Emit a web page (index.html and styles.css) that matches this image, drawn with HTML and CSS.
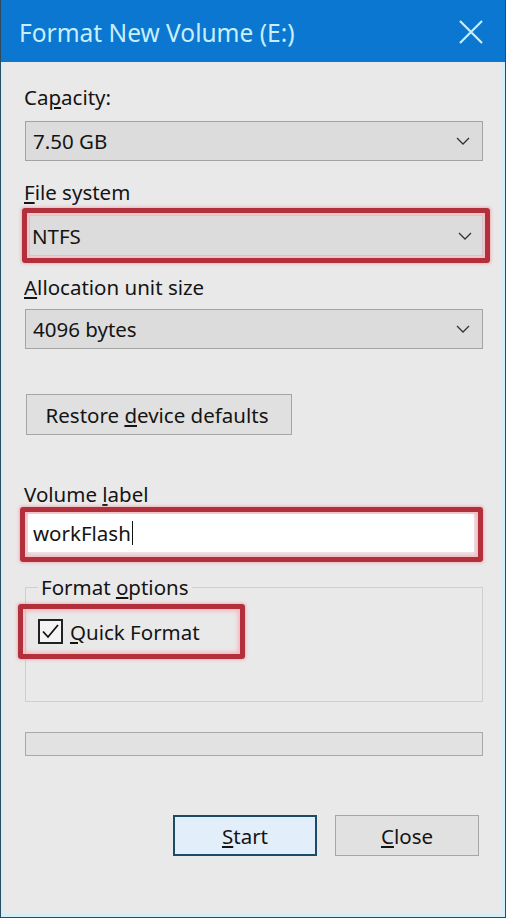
FILE: index.html
```html
<!DOCTYPE html>
<html>
<head>
<meta charset="utf-8">
<link rel="stylesheet" href="styles.css">
</head>
<body>
<div class="window">
  <div class="titlebar">
    <span class="title">Format New Volume (E:)</span>
    <svg class="close-x" width="24" height="24" viewBox="0 0 24 24"><path d="M1 1 L23 23 M23 1 L1 23" stroke="#c9eefb" stroke-width="2.2" fill="none"/></svg>
  </div>
  <div class="content">
    <div class="label lbl-capacity">Ca<u>p</u>acity:</div>
    <div class="select">
      <span>7.50 GB</span>
      <svg class="chev" width="14" height="8" viewBox="0 0 14 8"><path d="M1 1 L7 7 L13 1" stroke="#333" stroke-width="1.3" fill="none"/></svg>
    </div>

    <div class="label lbl-fs"><u>F</u>ile system</div>
    <div class="hl hl-fs">
      <div class="select select-in">
        <span>NTFS</span>
        <svg class="chev" width="14" height="8" viewBox="0 0 14 8"><path d="M1 1 L7 7 L13 1" stroke="#333" stroke-width="1.3" fill="none"/></svg>
      </div>
    </div>

    <div class="label lbl-alloc"><u>A</u>llocation unit size</div>
    <div class="select">
      <span>4096 bytes</span>
      <svg class="chev" width="14" height="8" viewBox="0 0 14 8"><path d="M1 1 L7 7 L13 1" stroke="#333" stroke-width="1.3" fill="none"/></svg>
    </div>

    <div class="btn btn-restore"><span>Restore <u>d</u>evice defaults</span></div>

    <div class="label lbl-vol">Volume <u>l</u>abel</div>
    <div class="hl hl-vol">
      <div class="input"><span>workFlash</span><span class="caret"></span></div>
    </div>

    <fieldset class="group">
      <legend>Format <u>o</u>ptions</legend>
      <div class="hl hl-quick">
        <span class="check"><svg width="21" height="21" viewBox="0 0 21 21"><path d="M3 10.5 L8 16 L18 4" stroke="#111" stroke-width="1.8" fill="none"/></svg></span>
        <span class="qf-text"><u>Q</u>uick Format</span>
      </div>
    </fieldset>

    <div class="progress"></div>

    <div class="buttons">
      <div class="btn btn-start"><span><u>S</u>tart</span></div>
      <div class="btn btn-close"><span><u>C</u>lose</span></div>
    </div>
  </div>
</div>
</body>
</html>
```

FILE: styles.css
```css
html, body {
  margin: 0;
  padding: 0;
  background: #e9e9e9;
}

.window {
  width: 506px;
  height: 918px;
  box-sizing: border-box;
  display: flex;
  flex-direction: column;
  background: #e9e9e9;
  border: 1px solid #2c4c5e;
  border-top: none;
  font-family: "Noto Sans", "Open Sans", sans-serif;
  color: #141414;
}

.titlebar {
  height: 62px;
  flex: none;
  background: #0b77d0;
  display: flex;
  align-items: center;
  justify-content: space-between;
  padding: 2px 22px 0 18px;
  box-sizing: border-box;
  color: #c9eefb;
  font-size: 24.5px;
}

.close-x {
  display: block;
  margin-top: -1px;
}

.content {
  flex: 1;
  display: flex;
  flex-direction: column;
  align-items: stretch;
  padding: 0 22px 0 24px;
  box-shadow: inset 3px 0 0 #d3eef8, inset -3px 0 0 #d3eef8, inset 0 -3px 0 #d3eef8;
  font-size: 20.5px;
}

.label {
  line-height: 24px;
  margin-left: -1px;
}

u {
  text-decoration-thickness: 1.5px;
  text-underline-offset: 2px;
}

.lbl-capacity { margin-top: 23px; }
.lbl-fs { margin-top: 19px; }
.lbl-alloc { margin-top: 12px; }
.lbl-vol { margin-top: 47px; }

.select {
  height: 40px;
  box-sizing: border-box;
  border: 1px solid #a3a3a3;
  background: #dcdcdc;
  display: flex;
  align-items: center;
  justify-content: space-between;
  padding: 0 12px 0 7px;
  margin-top: 12px;
}

.lbl-alloc + .select { margin-top: 10px; }

.hl {
  border: 5px solid #b2303c;
  border-radius: 3px;
  box-shadow: 0 0 3px 1px rgba(240, 130, 140, 0.55), inset 0 0 4px 2px rgba(248, 160, 168, 0.7);
  box-sizing: border-box;
}

.hl-fs {
  margin: 4px -7px 0 -3px;
  height: 55px;
  padding: 2px;
}

.select-in {
  margin: 0;
  height: 41px;
  border-color: #d5c4c6;
  padding-left: 2px;
  padding-right: 10px;
}

.btn {
  box-sizing: border-box;
  border: 1px solid #a6a6a6;
  background: #e0e0e0;
  display: flex;
  align-items: center;
  justify-content: center;
  height: 41px;
}

.btn-restore {
  width: 266px;
  margin-top: 45px;
  margin-left: 1px;
  padding-right: 4px;
}

.hl-vol {
  margin: 1px 0 0 -5px;
  height: 55px;
  padding: 2px 4px 0 3px;
}

.input {
  height: 38px;
  background: #ffffff;
  box-sizing: border-box;
  display: flex;
  align-items: center;
  padding-left: 5px;
}

.caret {
  display: inline-block;
  width: 0;
  height: 24px;
  border-left: 1.5px solid #111;
  margin-left: 1px;
}

.group {
  margin: 13px 0 0 0;
  padding: 0;
  border: 1px solid #cfcfcf;
  height: 127px;
  box-sizing: border-box;
  min-width: 0;
}

.group legend {
  line-height: 24px;
  margin-left: 12px;
  padding: 0 3px;
}

.hl-quick {
  margin: 5px 0 0 -8px;
  width: 227px;
  height: 55px;
  display: flex;
  align-items: center;
  padding-left: 15px;
}

.check {
  width: 25px;
  height: 25px;
  box-sizing: border-box;
  border: 2px solid #222;
  background: #f4f4f4;
  display: flex;
  align-items: center;
  justify-content: center;
}

.check svg { display: block; }

.qf-text {
  margin-left: 7px;
}

.progress {
  margin-top: 30px;
  height: 24px;
  box-sizing: border-box;
  border: 1px solid #a8a8a8;
  background: #e2e2e2;
}

.buttons {
  display: flex;
  justify-content: flex-end;
  gap: 18px;
  margin-top: 59px;
  margin-right: 4px;
}

.btn-start,
.btn-close {
  width: 144px;
}

.btn-start {
  border: 2px solid #1d4a66;
  background: #e2eef9;
}

.btn-close {
  background: #e1e1e1;
}
```
